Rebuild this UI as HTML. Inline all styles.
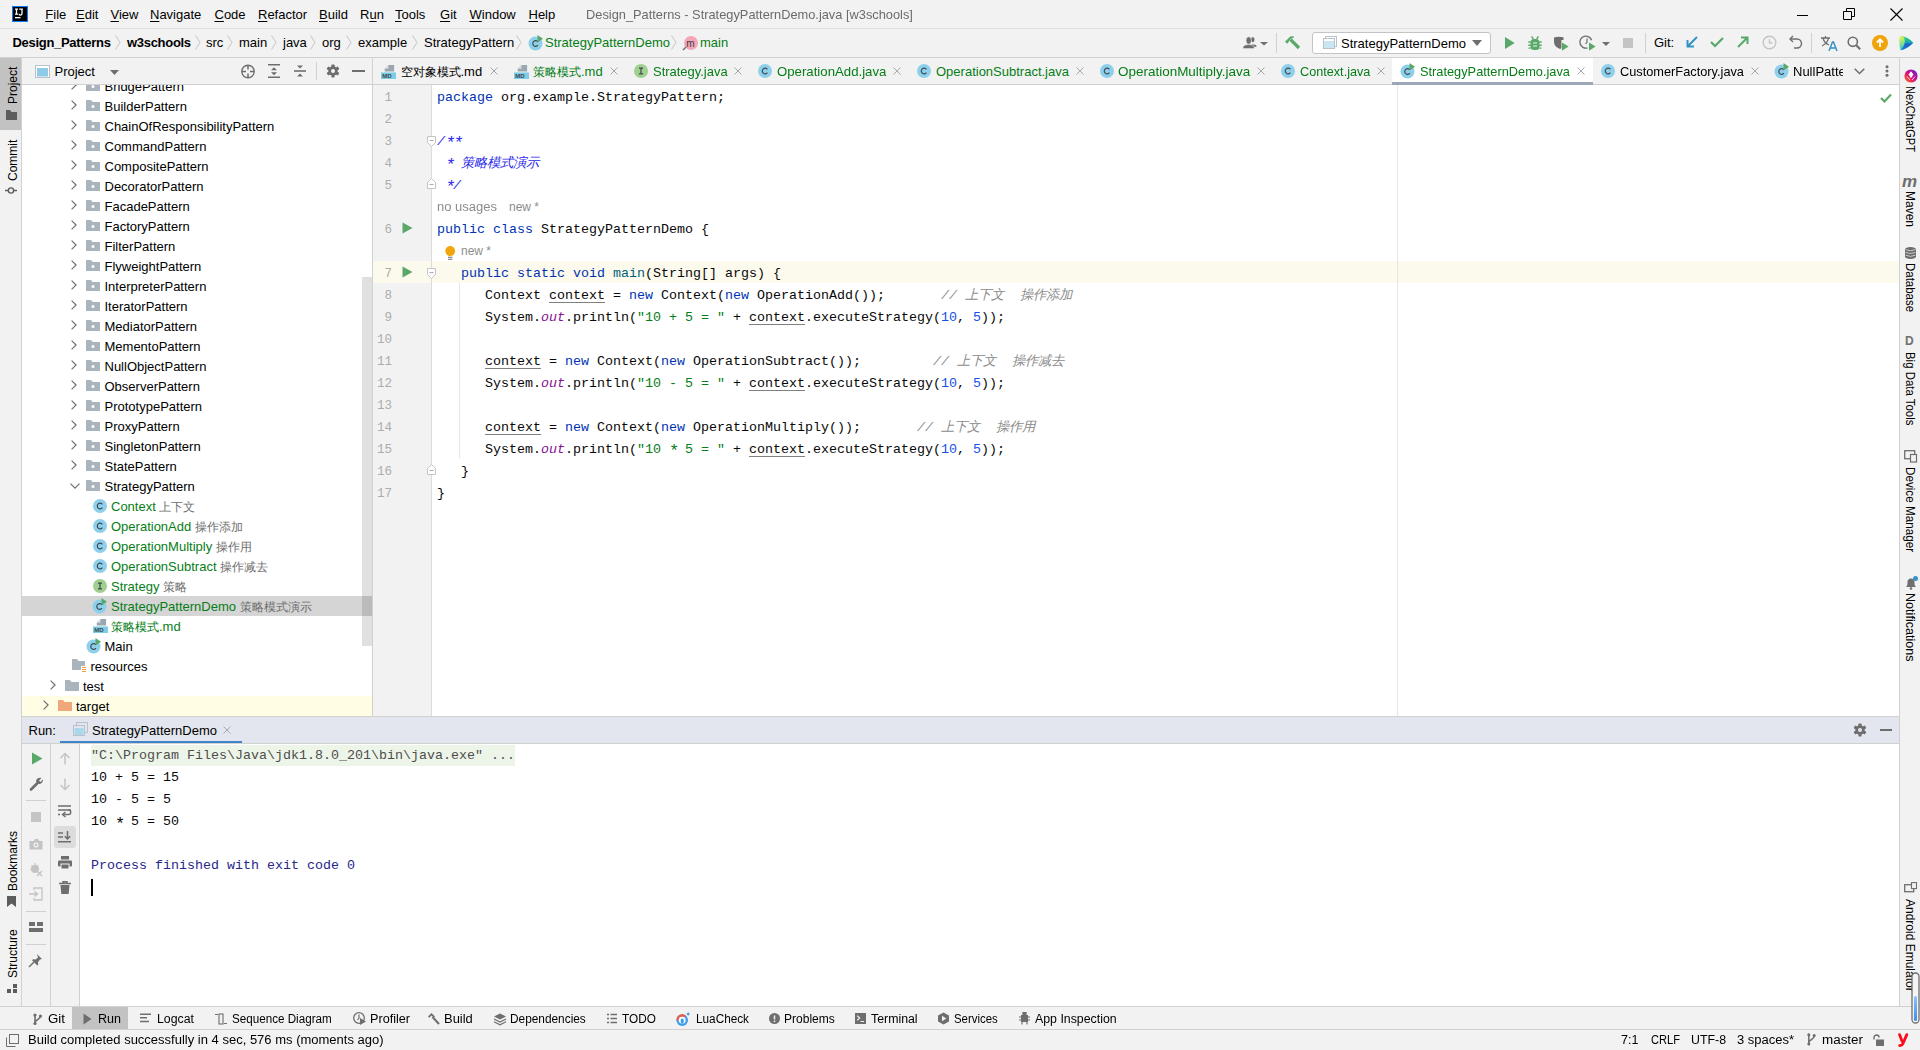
<!DOCTYPE html><html><head><meta charset="utf-8"><style>
html,body{margin:0;padding:0}
body{width:1920px;height:1050px;overflow:hidden;position:relative;background:#f2f2f2;font-family:"Liberation Sans",sans-serif}
.t{position:absolute;white-space:nowrap;line-height:1;font-family:"Liberation Sans",sans-serif}
.r{position:absolute}
.i{position:absolute;overflow:visible}
.m{font-family:"Liberation Mono",monospace;font-size:13.33px}
.u{text-decoration:underline;text-underline-offset:3px;text-decoration-color:#808080;text-decoration-thickness:1px}
.vt{transform-origin:0 0;transform:rotate(90deg)}
.vb{transform-origin:0 0;transform:rotate(-90deg)}
</style></head><body>
<svg width="0" height="0" style="position:absolute">
<defs>
<symbol id="cls" viewBox="0 0 16 16"><circle cx="8" cy="8" r="7" fill="#8dd0ec"/><path d="M10.4 6.4A2.8 2.8 0 1 0 10.4 9.6" fill="none" stroke="#42484e" stroke-width="1.2"/></symbol>
<symbol id="clsrun" viewBox="0 0 16 16"><circle cx="7.5" cy="8.5" r="7" fill="#8dd0ec"/><path d="M9.9 6.9A2.8 2.8 0 1 0 9.9 10.1" fill="none" stroke="#42484e" stroke-width="1.2"/><path d="M9.5 0v7.5l5.5-3.75z" fill="#59a869"/></symbol>
<symbol id="iface" viewBox="0 0 16 16"><circle cx="8" cy="8" r="7" fill="#9fd08f"/><path d="M6 5.2h4M6 10.8h4M8 5.2v5.6" stroke="#42484e" stroke-width="1.2"/></symbol>
<symbol id="folder" viewBox="0 0 16 16"><path d="M1 2h5l1.5 2H15v10H1z" fill="#aab4bc"/><circle cx="8" cy="9" r="1.6" fill="#fff"/></symbol>
<symbol id="folderp" viewBox="0 0 16 16"><path d="M1 2h5l1.5 2H15v10H1z" fill="#aab4bc"/></symbol>
<symbol id="md" viewBox="0 0 16 16"><path d="M8 1h6v7H4V5z" fill="#9aa7b0"/><path d="M4 5l4-4v4z" fill="#fff" opacity=".6"/><rect x="0" y="9" width="16" height="7" fill="#7ecbe4"/><text x="1.2" y="15.3" font-family="Liberation Sans" font-size="6.5" font-weight="bold" fill="#3d4a55">MD</text></symbol>
<symbol id="chev" viewBox="0 0 16 16"><path d="M6 4l4 4-4 4" fill="none" stroke="#6e6e6e" stroke-width="1.2"/></symbol>
<symbol id="chevd" viewBox="0 0 16 16"><path d="M4 6l4 4 4-4" fill="none" stroke="#6e6e6e" stroke-width="1.2"/></symbol>
<symbol id="runtri" viewBox="0 0 16 16"><path d="M4 2.5v11L13 8z" fill="#59a869"/></symbol>
<symbol id="close" viewBox="0 0 16 16"><path d="M4 4l8 8M12 4l-8 8" stroke="#a8a8a8" stroke-width="1.1"/></symbol>
</defs></svg>
<div class="r" style="left:0px;top:28px;width:1920px;height:1px;background:#dedede;"></div><div class="r" style="left:0px;top:57px;width:1920px;height:1px;background:#d1d1d1;"></div><div class="r" style="left:21px;top:58px;width:1px;height:948px;background:#d1d1d1;"></div><div class="r" style="left:0px;top:58px;width:21px;height:72px;background:#c2c2c2;"></div><div class="r" style="left:22px;top:84px;width:350px;height:1px;background:#d1d1d1;"></div><div class="r" style="left:22px;top:85px;width:350px;height:631px;background:#fff;"></div><div class="r" style="left:372px;top:58px;width:1px;height:658px;background:#d1d1d1;"></div><div class="r" style="left:22px;top:596px;width:350px;height:20px;background:#d5d5d5;"></div><div class="r" style="left:22px;top:696px;width:350px;height:20px;background:#fffee4;"></div><div class="r" style="left:362px;top:277px;width:10px;height:369px;background:rgba(0,0,0,0.12);"></div><div class="r" style="left:373px;top:84px;width:1526px;height:1px;background:#d1d1d1;"></div><div class="r" style="left:373px;top:85px;width:1526px;height:631px;background:#fff;"></div><div class="r" style="left:373px;top:85px;width:58px;height:631px;background:#f2f2f2;"></div><div class="r" style="left:373px;top:261px;width:1526px;height:22px;background:#fcfaed;"></div><div class="r" style="left:431px;top:85px;width:1px;height:631px;background:#dcdcdc;"></div><div class="r" style="left:1397px;top:85px;width:1px;height:631px;background:#e6e6e6;"></div><div class="r" style="left:459px;top:283px;width:1px;height:175px;background:#e6e6e6;"></div><div class="r" style="left:1392px;top:58px;width:201px;height:24px;background:#ffffff;"></div><div class="r" style="left:1392px;top:82px;width:201px;height:3px;background:#9ca7b8;"></div><div class="r" style="left:1899px;top:58px;width:1px;height:948px;background:#d1d1d1;"></div><div class="r" style="left:22px;top:716px;width:1877px;height:1px;background:#d1d1d1;"></div><div class="r" style="left:22px;top:717px;width:1877px;height:26px;background:#e3e6ee;"></div><div class="r" style="left:60px;top:741px;width:182px;height:3px;background:#4083c9;"></div><div class="r" style="left:22px;top:743px;width:1877px;height:1px;background:#d1d1d1;"></div><div class="r" style="left:80px;top:744px;width:1819px;height:262px;background:#fff;"></div><div class="r" style="left:50px;top:744px;width:1px;height:262px;background:#d1d1d1;"></div><div class="r" style="left:79px;top:744px;width:1px;height:262px;background:#d1d1d1;"></div><div class="r" style="left:91px;top:745px;width:424px;height:21px;background:#edf5e9;"></div><div class="r" style="left:0px;top:1006px;width:1920px;height:1px;background:#d1d1d1;"></div><div class="r" style="left:0px;top:1029px;width:1920px;height:1px;background:#d1d1d1;"></div><div class="r" style="left:72px;top:1007px;width:56px;height:22px;background:#c2c2c2;"></div><svg class="i" style="left:12px;top:6px;" width="16" height="16" viewBox="0 0 16 16"><rect x="0.5" y="0.5" width="15" height="15" fill="#000" stroke="#087cfa" stroke-width="1"/><path d="M3 3.2h3M4.5 3.2v5M3 8.2h3M7.2 3.2h3.6M10 3.2v4a1.5 1.5 0 0 1-3 .6" fill="none" stroke="#fff" stroke-width="1.3"/><rect x="3" y="11" width="5.5" height="1.3" fill="#fff"/></svg><div class="t " style="left:45.3px;top:8.00px;font-size:13px;color:#000;"><span style="text-decoration:underline;text-underline-offset:2px">F</span>ile</div><div class="t " style="left:76px;top:8.00px;font-size:13px;color:#000;"><span style="text-decoration:underline;text-underline-offset:2px">E</span>dit</div><div class="t " style="left:110.5px;top:8.00px;font-size:13px;color:#000;"><span style="text-decoration:underline;text-underline-offset:2px">V</span>iew</div><div class="t " style="left:150px;top:8.00px;font-size:13px;color:#000;"><span style="text-decoration:underline;text-underline-offset:2px">N</span>avigate</div><div class="t " style="left:214.5px;top:8.00px;font-size:13px;color:#000;"><span style="text-decoration:underline;text-underline-offset:2px">C</span>ode</div><div class="t " style="left:258px;top:8.00px;font-size:13px;color:#000;"><span style="text-decoration:underline;text-underline-offset:2px">R</span>efactor</div><div class="t " style="left:319px;top:8.00px;font-size:13px;color:#000;"><span style="text-decoration:underline;text-underline-offset:2px">B</span>uild</div><div class="t " style="left:360px;top:8.00px;font-size:13px;color:#000;">R<span style="text-decoration:underline;text-underline-offset:2px">u</span>n</div><div class="t " style="left:395px;top:8.00px;font-size:13px;color:#000;"><span style="text-decoration:underline;text-underline-offset:2px">T</span>ools</div><div class="t " style="left:440px;top:8.00px;font-size:13px;color:#000;"><span style="text-decoration:underline;text-underline-offset:2px">G</span>it</div><div class="t " style="left:469.5px;top:8.00px;font-size:13px;color:#000;"><span style="text-decoration:underline;text-underline-offset:2px">W</span>indow</div><div class="t " style="left:528.5px;top:8.00px;font-size:13px;color:#000;"><span style="text-decoration:underline;text-underline-offset:2px">H</span>elp</div><div class="t " style="left:586px;top:7.50px;font-size:13px;color:#6b6b6b;transform:scaleX(0.9857);transform-origin:0 0;">Design_Patterns - StrategyPatternDemo.java [w3schools]</div><svg class="i" style="left:1797px;top:9px;" width="12" height="12" viewBox="0 0 12 12"><path d="M0 6.5h11" stroke="#000" stroke-width="1"/></svg><svg class="i" style="left:1843px;top:8px;" width="12" height="12" viewBox="0 0 12 12"><path d="M0.5 3.5h8v8h-8zM3.5 3.5v-3h8v8h-3" fill="none" stroke="#000" stroke-width="1"/></svg><svg class="i" style="left:1890px;top:8px;" width="13" height="13" viewBox="0 0 13 13"><path d="M0.5 0.5l12 12M12.5 0.5l-12 12" stroke="#000" stroke-width="1.1"/></svg><div class="t " style="left:12.5px;top:35.50px;font-size:13px;color:#000;font-weight:bold;letter-spacing:-0.3px;">Design_Patterns</div><div class="t " style="left:127px;top:35.50px;font-size:13px;color:#000;font-weight:bold;letter-spacing:-0.3px;">w3schools</div><div class="t " style="left:206px;top:35.50px;font-size:13px;color:#000;">src</div><div class="t " style="left:239px;top:35.50px;font-size:13px;color:#000;">main</div><div class="t " style="left:283px;top:35.50px;font-size:13px;color:#000;">java</div><div class="t " style="left:322px;top:35.50px;font-size:13px;color:#000;">org</div><div class="t " style="left:358px;top:35.50px;font-size:13px;color:#000;">example</div><div class="t " style="left:424px;top:35.50px;font-size:13px;color:#000;">StrategyPattern</div><svg class="i" style="left:115px;top:35px;" width="6" height="15" viewBox="0 0 6 15"><path d="M0.5 0.5l4.5 7-4.5 7" fill="none" stroke="#c4c4c4" stroke-width="1"/></svg><svg class="i" style="left:195px;top:35px;" width="6" height="15" viewBox="0 0 6 15"><path d="M0.5 0.5l4.5 7-4.5 7" fill="none" stroke="#c4c4c4" stroke-width="1"/></svg><svg class="i" style="left:227px;top:35px;" width="6" height="15" viewBox="0 0 6 15"><path d="M0.5 0.5l4.5 7-4.5 7" fill="none" stroke="#c4c4c4" stroke-width="1"/></svg><svg class="i" style="left:271px;top:35px;" width="6" height="15" viewBox="0 0 6 15"><path d="M0.5 0.5l4.5 7-4.5 7" fill="none" stroke="#c4c4c4" stroke-width="1"/></svg><svg class="i" style="left:310px;top:35px;" width="6" height="15" viewBox="0 0 6 15"><path d="M0.5 0.5l4.5 7-4.5 7" fill="none" stroke="#c4c4c4" stroke-width="1"/></svg><svg class="i" style="left:346px;top:35px;" width="6" height="15" viewBox="0 0 6 15"><path d="M0.5 0.5l4.5 7-4.5 7" fill="none" stroke="#c4c4c4" stroke-width="1"/></svg><svg class="i" style="left:412px;top:35px;" width="6" height="15" viewBox="0 0 6 15"><path d="M0.5 0.5l4.5 7-4.5 7" fill="none" stroke="#c4c4c4" stroke-width="1"/></svg><svg class="i" style="left:516px;top:35px;" width="6" height="15" viewBox="0 0 6 15"><path d="M0.5 0.5l4.5 7-4.5 7" fill="none" stroke="#c4c4c4" stroke-width="1"/></svg><svg class="i" style="left:671px;top:35px;" width="6" height="15" viewBox="0 0 6 15"><path d="M0.5 0.5l4.5 7-4.5 7" fill="none" stroke="#c4c4c4" stroke-width="1"/></svg><svg class="i" style="left:528px;top:35px;" width="16" height="16" viewBox="0 0 16 16"><use href="#clsrun"/></svg><div class="t " style="left:545px;top:35.50px;font-size:13px;color:#067d17;">StrategyPatternDemo</div><svg class="i" style="left:683px;top:35px;" width="16" height="16" viewBox="0 0 16 16"><circle cx="8" cy="8" r="7" fill="#f4a6b8"/><text x="3.2" y="11.5" font-family="Liberation Sans" font-size="10" fill="#3d3d3d">m</text><path d="M0 15l3-3" stroke="#6e6e6e" stroke-width="1.4"/></svg><div class="t " style="left:700px;top:35.50px;font-size:13px;color:#067d17;">main</div><svg class="i" style="left:1240px;top:34px;" width="28" height="16" viewBox="0 0 28 16"><ellipse cx="12.8" cy="5.6" rx="1.7" ry="2.6" fill="#6e6e6e"/><path d="M11.5 10.2Q16.2 10.2 16.8 12.6L14.5 13z" fill="#6e6e6e"/><ellipse cx="8.7" cy="6.5" rx="2.7" ry="3.7" fill="#6e6e6e" stroke="#f2f2f2" stroke-width=".6"/><path d="M2.8 14.6Q2.8 10.6 8.7 10.6Q14 10.6 14.2 13.4L14.2 14.6z" fill="#6e6e6e" stroke="#f2f2f2" stroke-width=".5"/><path d="M20 8h8l-4 3.6z" fill="#6e6e6e"/></svg><div class="r" style="left:1276px;top:33px;width:1px;height:20px;background:#d1d1d1;"></div><svg class="i" style="left:1284px;top:34px;" width="16" height="16" viewBox="0 0 16 16"><path d="M1 7.8L6.2 2.4 10.2 2.2 9.2 3.9 6.9 4.7 3.3 9.7z" fill="#59a869"/><path d="M6.6 5.6L15 14" stroke="#59a869" stroke-width="3.2"/></svg><div class="r" style="left:1312px;top:32px;width:177px;height:20px;background:#fff;border:1px solid #c4c4c4;border-radius:3px"></div><svg class="i" style="left:1322px;top:35px;" width="16" height="16" viewBox="0 0 16 16"><rect x="3.5" y="1.5" width="11" height="10" fill="none" stroke="#b8c2ca"/><rect x="1.5" y="3.5" width="11" height="10" fill="#fff" stroke="#b8c2ca"/><rect x="2" y="6" width="10" height="7" fill="#cbe6f2"/></svg><div class="t " style="left:1341px;top:36.50px;font-size:13px;color:#000;">StrategyPatternDemo</div><svg class="i" style="left:1472px;top:40px;" width="10" height="6" viewBox="0 0 10 6"><path d="M0 0h10l-5 6z" fill="#6e6e6e"/></svg><svg class="i" style="left:1503px;top:35px;" width="16" height="16" viewBox="0 0 16 16"><path d="M2 2v12l9.7-6z" fill="#59a869"/></svg><svg class="i" style="left:1528px;top:35px;" width="14" height="16" viewBox="0 0 14 16"><rect x="2.5" y="4" width="9" height="11" rx="3.5" fill="#59a869"/><path d="M5.3 4.2L3.6 1.4M8.7 4.2l1.7-2.8M0.3 7h2.5M11.2 7h2.5M0.3 10.3h2.5M11.2 10.3h2.5M0.6 13.4l2-.6M13.4 13.4l-2-.6" stroke="#59a869" stroke-width="1.4"/><path d="M5 8h4M5 11h4" stroke="#f2f2f2" stroke-width="1.2"/></svg><svg class="i" style="left:1553px;top:35px;" width="17" height="17" viewBox="0 0 17 17"><path d="M1 2.5Q5 1.2 10.5 2.2V5H8.4V13.6Q7 14 6 13.6Q1 11.5 1 6.5z" fill="#6e6e6e"/><path d="M9 7.5v8.2l6.6-4.1z" fill="#59a869"/></svg><svg class="i" style="left:1580px;top:35px;" width="17" height="17" viewBox="0 0 17 17"><path d="M11.6 5.3A6 6 0 1 0 7.5 12.9" fill="none" stroke="#6e6e6e" stroke-width="1.4"/><path d="M7 3.6V7L5.6 9" fill="none" stroke="#6e6e6e" stroke-width="1.2"/><path d="M9 7.5v8.2l6.6-4.1z" fill="#59a869"/></svg><svg class="i" style="left:1602px;top:42px;" width="8" height="4" viewBox="0 0 8 4"><path d="M0 0h8l-4 4z" fill="#6e6e6e"/></svg><div class="r" style="left:1623px;top:38px;width:10px;height:10px;background:#c4c4c4;"></div><div class="r" style="left:1645px;top:33px;width:1px;height:20px;background:#d1d1d1;"></div><div class="t " style="left:1654px;top:35.50px;font-size:13px;color:#000;">Git:</div><svg class="i" style="left:1686px;top:36px;" width="12" height="12" viewBox="0 0 12 12"><path d="M11 1L2 10M1.5 4v6.5H8" fill="none" stroke="#3592c4" stroke-width="2"/></svg><svg class="i" style="left:1710px;top:36px;" width="14" height="12" viewBox="0 0 14 12"><path d="M1 6l4 4 8-8" fill="none" stroke="#59a869" stroke-width="2.2"/></svg><svg class="i" style="left:1737px;top:36px;" width="12" height="12" viewBox="0 0 12 12"><path d="M1 11L10 2M4 1.5h6.5V8" fill="none" stroke="#59a869" stroke-width="2"/></svg><svg class="i" style="left:1762px;top:35px;" width="15" height="15" viewBox="0 0 15 15"><circle cx="7.5" cy="7.5" r="6.3" fill="none" stroke="#c4c4c4" stroke-width="1.4"/><path d="M7.5 4v4h3" fill="none" stroke="#c4c4c4" stroke-width="1.3"/></svg><svg class="i" style="left:1789px;top:34px;" width="14" height="14" viewBox="0 0 14 14"><path d="M4 2L1 5l3 3" fill="none" stroke="#6e6e6e" stroke-width="1.4"/><path d="M1.5 5H8a4.5 4.5 0 0 1 0 9H5" fill="none" stroke="#6e6e6e" stroke-width="1.4"/></svg><div class="r" style="left:1811px;top:33px;width:1px;height:20px;background:#d1d1d1;"></div><svg class="i" style="left:1820px;top:35px;" width="17" height="17" viewBox="0 0 17 17"><path d="M1 3h9M5.5 1v2M3 3c1 4 3 6 6 7M8.5 3C8 6 6 9 2 11" fill="none" stroke="#6e6e6e" stroke-width="1.3"/><path d="M9 16l3.5-9h1l3.5 9M10.3 13h5.4" fill="none" stroke="#3592c4" stroke-width="1.5"/></svg><svg class="i" style="left:1847px;top:36px;" width="14" height="14" viewBox="0 0 14 14"><circle cx="5.8" cy="5.8" r="4.6" fill="none" stroke="#6e6e6e" stroke-width="1.6"/><path d="M9.2 9.2l4 4" stroke="#6e6e6e" stroke-width="2"/></svg><svg class="i" style="left:1872px;top:35px;" width="16" height="16" viewBox="0 0 16 16"><circle cx="8" cy="8" r="8" fill="#f0a30a"/><path d="M8 12V4.5M4.8 7.5L8 4.3l3.2 3.2" fill="none" stroke="#fff" stroke-width="1.8"/></svg><svg class="i" style="left:1899px;top:35px;" width="15" height="16" viewBox="0 0 15 16"><defs><linearGradient id="tbA" x1="0" y1="0" x2=".3" y2="1"><stop offset="0" stop-color="#f3f53a"/><stop offset=".5" stop-color="#8ee08a"/><stop offset="1" stop-color="#18c6d8"/></linearGradient><linearGradient id="tbB" x1="0" y1="0" x2="0" y2="1"><stop offset="0" stop-color="#2ad77a"/><stop offset=".45" stop-color="#16a7b8"/><stop offset=".55" stop-color="#1f5fc8"/><stop offset="1" stop-color="#1b7ad6"/></linearGradient></defs><path d="M0.8 1.2Q7 0.8 14.2 7.8Q8 14.6 1.6 15.2Q-0.6 8 0.8 1.2z" fill="url(#tbA)"/><path d="M1.5 1.2Q9 1.5 14.2 7.8Q9 13.5 1.8 15.2Q7.5 9 5.2 2.5z" fill="url(#tbB)"/></svg><div class="t vb" style="left:6.5px;top:104px;font-size:12px;color:#000">Project</div><svg class="i" style="left:6px;top:110px;" width="11" height="10" viewBox="0 0 11 10"><path d="M0 0h4l1.5 2H11v8H0z" fill="#5c5c5c"/></svg><div class="t vb" style="left:6.5px;top:181px;font-size:12px;color:#000">Commit</div><svg class="i" style="left:5px;top:186px;" width="12" height="9" viewBox="0 0 12 9"><circle cx="6" cy="4.5" r="2.6" fill="none" stroke="#5c5c5c" stroke-width="1.4"/><path d="M0 4.5h3.4M8.6 4.5H12" stroke="#5c5c5c" stroke-width="1.4"/></svg><div class="t vb" style="left:6.5px;top:891px;font-size:12px;color:#000">Bookmarks</div><svg class="i" style="left:7px;top:896px;" width="9" height="11" viewBox="0 0 9 11"><path d="M0 0h9v11l-4.5-3.5L0 11z" fill="#5c5c5c"/></svg><div class="t vb" style="left:6.5px;top:978px;font-size:12px;color:#000">Structure</div><svg class="i" style="left:7px;top:984px;" width="10" height="9" viewBox="0 0 10 9"><rect x="0" y="5" width="4" height="4" fill="#5c5c5c"/><rect x="6" y="5" width="4" height="4" fill="#5c5c5c"/><rect x="6" y="0" width="4" height="4" fill="#5c5c5c"/></svg><svg class="i" style="left:35px;top:65px;" width="15" height="13" viewBox="0 0 15 13"><rect x="0.5" y="0.5" width="14" height="12" fill="#fff" stroke="#b8c2ca"/><rect x="2" y="3" width="11" height="8.5" fill="#8fcbe6"/></svg><div class="t " style="left:54.5px;top:65.00px;font-size:13px;color:#000;">Project</div><svg class="i" style="left:110px;top:70px;" width="9" height="5" viewBox="0 0 9 5"><path d="M0 0h9l-4.5 5z" fill="#6e6e6e"/></svg><svg class="i" style="left:241px;top:64px;" width="15" height="15" viewBox="0 0 15 15"><circle cx="7" cy="7.5" r="6.2" fill="none" stroke="#6e6e6e" stroke-width="1.4"/><path d="M7 1.5v4M7 9.5v4M1 7.5h4M9 7.5h4" stroke="#6e6e6e" stroke-width="1.5"/></svg><svg class="i" style="left:268px;top:64px;" width="12" height="15" viewBox="0 0 12 15"><path d="M0 0.8h12M0 13.2h12" stroke="#6e6e6e" stroke-width="1.6"/><path d="M3 6.2L6 3.2l3 3zM3 8.3L6 11.3l3-3z" fill="#6e6e6e"/></svg><svg class="i" style="left:294px;top:64px;" width="12" height="15" viewBox="0 0 12 15"><path d="M0 7h12" stroke="#6e6e6e" stroke-width="1.6"/><path d="M3 1.5L6 4.5l3-3zM3 12.5L6 9.5l3 3z" fill="#6e6e6e"/></svg><div class="r" style="left:316px;top:62px;width:1px;height:18px;background:#d1d1d1;"></div><svg class="i" style="left:326px;top:64px;" width="14" height="14" viewBox="0 0 14 14"><g transform="translate(7 7)"><g fill="#6e6e6e"><circle r="4.7"/><rect x="-1.6" y="-6.5" width="3.2" height="13" rx=".7"/><rect x="-1.6" y="-6.5" width="3.2" height="13" rx=".7" transform="rotate(60)"/><rect x="-1.6" y="-6.5" width="3.2" height="13" rx=".7" transform="rotate(120)"/></g><circle r="2" fill="#f2f2f2"/></g></svg><div class="r" style="left:352px;top:70px;width:13px;height:2px;background:#6e6e6e;"></div><div class="r" style="left:22px;top:85px;width:340px;height:631px;overflow:hidden"><svg class="i" style="left:49px;top:-5px;" width="6" height="10" viewBox="0 0 6 10"><path d="M0.6 0.6l4.5 4.4-4.5 4.4" fill="none" stroke="#6e6e6e" stroke-width="1.2"/></svg><svg class="i" style="left:64px;top:-5px;" width="14" height="11" viewBox="0 0 14 11"><path d="M0 0h5l1.5 2H14v9H0z" fill="#aab4bc"/><circle cx="7" cy="6.5" r="1.5" fill="#fff"/></svg><div class="t " style="left:82.5px;top:-5.50px;font-size:13px;color:#000;">BridgePattern</div><svg class="i" style="left:49px;top:15px;" width="6" height="10" viewBox="0 0 6 10"><path d="M0.6 0.6l4.5 4.4-4.5 4.4" fill="none" stroke="#6e6e6e" stroke-width="1.2"/></svg><svg class="i" style="left:64px;top:15px;" width="14" height="11" viewBox="0 0 14 11"><path d="M0 0h5l1.5 2H14v9H0z" fill="#aab4bc"/><circle cx="7" cy="6.5" r="1.5" fill="#fff"/></svg><div class="t " style="left:82.5px;top:14.50px;font-size:13px;color:#000;">BuilderPattern</div><svg class="i" style="left:49px;top:35px;" width="6" height="10" viewBox="0 0 6 10"><path d="M0.6 0.6l4.5 4.4-4.5 4.4" fill="none" stroke="#6e6e6e" stroke-width="1.2"/></svg><svg class="i" style="left:64px;top:35px;" width="14" height="11" viewBox="0 0 14 11"><path d="M0 0h5l1.5 2H14v9H0z" fill="#aab4bc"/><circle cx="7" cy="6.5" r="1.5" fill="#fff"/></svg><div class="t " style="left:82.5px;top:34.50px;font-size:13px;color:#000;">ChainOfResponsibilityPattern</div><svg class="i" style="left:49px;top:55px;" width="6" height="10" viewBox="0 0 6 10"><path d="M0.6 0.6l4.5 4.4-4.5 4.4" fill="none" stroke="#6e6e6e" stroke-width="1.2"/></svg><svg class="i" style="left:64px;top:55px;" width="14" height="11" viewBox="0 0 14 11"><path d="M0 0h5l1.5 2H14v9H0z" fill="#aab4bc"/><circle cx="7" cy="6.5" r="1.5" fill="#fff"/></svg><div class="t " style="left:82.5px;top:54.50px;font-size:13px;color:#000;">CommandPattern</div><svg class="i" style="left:49px;top:75px;" width="6" height="10" viewBox="0 0 6 10"><path d="M0.6 0.6l4.5 4.4-4.5 4.4" fill="none" stroke="#6e6e6e" stroke-width="1.2"/></svg><svg class="i" style="left:64px;top:75px;" width="14" height="11" viewBox="0 0 14 11"><path d="M0 0h5l1.5 2H14v9H0z" fill="#aab4bc"/><circle cx="7" cy="6.5" r="1.5" fill="#fff"/></svg><div class="t " style="left:82.5px;top:74.50px;font-size:13px;color:#000;">CompositePattern</div><svg class="i" style="left:49px;top:95px;" width="6" height="10" viewBox="0 0 6 10"><path d="M0.6 0.6l4.5 4.4-4.5 4.4" fill="none" stroke="#6e6e6e" stroke-width="1.2"/></svg><svg class="i" style="left:64px;top:95px;" width="14" height="11" viewBox="0 0 14 11"><path d="M0 0h5l1.5 2H14v9H0z" fill="#aab4bc"/><circle cx="7" cy="6.5" r="1.5" fill="#fff"/></svg><div class="t " style="left:82.5px;top:94.50px;font-size:13px;color:#000;">DecoratorPattern</div><svg class="i" style="left:49px;top:115px;" width="6" height="10" viewBox="0 0 6 10"><path d="M0.6 0.6l4.5 4.4-4.5 4.4" fill="none" stroke="#6e6e6e" stroke-width="1.2"/></svg><svg class="i" style="left:64px;top:115px;" width="14" height="11" viewBox="0 0 14 11"><path d="M0 0h5l1.5 2H14v9H0z" fill="#aab4bc"/><circle cx="7" cy="6.5" r="1.5" fill="#fff"/></svg><div class="t " style="left:82.5px;top:114.50px;font-size:13px;color:#000;">FacadePattern</div><svg class="i" style="left:49px;top:135px;" width="6" height="10" viewBox="0 0 6 10"><path d="M0.6 0.6l4.5 4.4-4.5 4.4" fill="none" stroke="#6e6e6e" stroke-width="1.2"/></svg><svg class="i" style="left:64px;top:135px;" width="14" height="11" viewBox="0 0 14 11"><path d="M0 0h5l1.5 2H14v9H0z" fill="#aab4bc"/><circle cx="7" cy="6.5" r="1.5" fill="#fff"/></svg><div class="t " style="left:82.5px;top:134.50px;font-size:13px;color:#000;">FactoryPattern</div><svg class="i" style="left:49px;top:155px;" width="6" height="10" viewBox="0 0 6 10"><path d="M0.6 0.6l4.5 4.4-4.5 4.4" fill="none" stroke="#6e6e6e" stroke-width="1.2"/></svg><svg class="i" style="left:64px;top:155px;" width="14" height="11" viewBox="0 0 14 11"><path d="M0 0h5l1.5 2H14v9H0z" fill="#aab4bc"/><circle cx="7" cy="6.5" r="1.5" fill="#fff"/></svg><div class="t " style="left:82.5px;top:154.50px;font-size:13px;color:#000;">FilterPattern</div><svg class="i" style="left:49px;top:175px;" width="6" height="10" viewBox="0 0 6 10"><path d="M0.6 0.6l4.5 4.4-4.5 4.4" fill="none" stroke="#6e6e6e" stroke-width="1.2"/></svg><svg class="i" style="left:64px;top:175px;" width="14" height="11" viewBox="0 0 14 11"><path d="M0 0h5l1.5 2H14v9H0z" fill="#aab4bc"/><circle cx="7" cy="6.5" r="1.5" fill="#fff"/></svg><div class="t " style="left:82.5px;top:174.50px;font-size:13px;color:#000;">FlyweightPattern</div><svg class="i" style="left:49px;top:195px;" width="6" height="10" viewBox="0 0 6 10"><path d="M0.6 0.6l4.5 4.4-4.5 4.4" fill="none" stroke="#6e6e6e" stroke-width="1.2"/></svg><svg class="i" style="left:64px;top:195px;" width="14" height="11" viewBox="0 0 14 11"><path d="M0 0h5l1.5 2H14v9H0z" fill="#aab4bc"/><circle cx="7" cy="6.5" r="1.5" fill="#fff"/></svg><div class="t " style="left:82.5px;top:194.50px;font-size:13px;color:#000;">InterpreterPattern</div><svg class="i" style="left:49px;top:215px;" width="6" height="10" viewBox="0 0 6 10"><path d="M0.6 0.6l4.5 4.4-4.5 4.4" fill="none" stroke="#6e6e6e" stroke-width="1.2"/></svg><svg class="i" style="left:64px;top:215px;" width="14" height="11" viewBox="0 0 14 11"><path d="M0 0h5l1.5 2H14v9H0z" fill="#aab4bc"/><circle cx="7" cy="6.5" r="1.5" fill="#fff"/></svg><div class="t " style="left:82.5px;top:214.50px;font-size:13px;color:#000;">IteratorPattern</div><svg class="i" style="left:49px;top:235px;" width="6" height="10" viewBox="0 0 6 10"><path d="M0.6 0.6l4.5 4.4-4.5 4.4" fill="none" stroke="#6e6e6e" stroke-width="1.2"/></svg><svg class="i" style="left:64px;top:235px;" width="14" height="11" viewBox="0 0 14 11"><path d="M0 0h5l1.5 2H14v9H0z" fill="#aab4bc"/><circle cx="7" cy="6.5" r="1.5" fill="#fff"/></svg><div class="t " style="left:82.5px;top:234.50px;font-size:13px;color:#000;">MediatorPattern</div><svg class="i" style="left:49px;top:255px;" width="6" height="10" viewBox="0 0 6 10"><path d="M0.6 0.6l4.5 4.4-4.5 4.4" fill="none" stroke="#6e6e6e" stroke-width="1.2"/></svg><svg class="i" style="left:64px;top:255px;" width="14" height="11" viewBox="0 0 14 11"><path d="M0 0h5l1.5 2H14v9H0z" fill="#aab4bc"/><circle cx="7" cy="6.5" r="1.5" fill="#fff"/></svg><div class="t " style="left:82.5px;top:254.50px;font-size:13px;color:#000;">MementoPattern</div><svg class="i" style="left:49px;top:275px;" width="6" height="10" viewBox="0 0 6 10"><path d="M0.6 0.6l4.5 4.4-4.5 4.4" fill="none" stroke="#6e6e6e" stroke-width="1.2"/></svg><svg class="i" style="left:64px;top:275px;" width="14" height="11" viewBox="0 0 14 11"><path d="M0 0h5l1.5 2H14v9H0z" fill="#aab4bc"/><circle cx="7" cy="6.5" r="1.5" fill="#fff"/></svg><div class="t " style="left:82.5px;top:274.50px;font-size:13px;color:#000;">NullObjectPattern</div><svg class="i" style="left:49px;top:295px;" width="6" height="10" viewBox="0 0 6 10"><path d="M0.6 0.6l4.5 4.4-4.5 4.4" fill="none" stroke="#6e6e6e" stroke-width="1.2"/></svg><svg class="i" style="left:64px;top:295px;" width="14" height="11" viewBox="0 0 14 11"><path d="M0 0h5l1.5 2H14v9H0z" fill="#aab4bc"/><circle cx="7" cy="6.5" r="1.5" fill="#fff"/></svg><div class="t " style="left:82.5px;top:294.50px;font-size:13px;color:#000;">ObserverPattern</div><svg class="i" style="left:49px;top:315px;" width="6" height="10" viewBox="0 0 6 10"><path d="M0.6 0.6l4.5 4.4-4.5 4.4" fill="none" stroke="#6e6e6e" stroke-width="1.2"/></svg><svg class="i" style="left:64px;top:315px;" width="14" height="11" viewBox="0 0 14 11"><path d="M0 0h5l1.5 2H14v9H0z" fill="#aab4bc"/><circle cx="7" cy="6.5" r="1.5" fill="#fff"/></svg><div class="t " style="left:82.5px;top:314.50px;font-size:13px;color:#000;">PrototypePattern</div><svg class="i" style="left:49px;top:335px;" width="6" height="10" viewBox="0 0 6 10"><path d="M0.6 0.6l4.5 4.4-4.5 4.4" fill="none" stroke="#6e6e6e" stroke-width="1.2"/></svg><svg class="i" style="left:64px;top:335px;" width="14" height="11" viewBox="0 0 14 11"><path d="M0 0h5l1.5 2H14v9H0z" fill="#aab4bc"/><circle cx="7" cy="6.5" r="1.5" fill="#fff"/></svg><div class="t " style="left:82.5px;top:334.50px;font-size:13px;color:#000;">ProxyPattern</div><svg class="i" style="left:49px;top:355px;" width="6" height="10" viewBox="0 0 6 10"><path d="M0.6 0.6l4.5 4.4-4.5 4.4" fill="none" stroke="#6e6e6e" stroke-width="1.2"/></svg><svg class="i" style="left:64px;top:355px;" width="14" height="11" viewBox="0 0 14 11"><path d="M0 0h5l1.5 2H14v9H0z" fill="#aab4bc"/><circle cx="7" cy="6.5" r="1.5" fill="#fff"/></svg><div class="t " style="left:82.5px;top:354.50px;font-size:13px;color:#000;">SingletonPattern</div><svg class="i" style="left:49px;top:375px;" width="6" height="10" viewBox="0 0 6 10"><path d="M0.6 0.6l4.5 4.4-4.5 4.4" fill="none" stroke="#6e6e6e" stroke-width="1.2"/></svg><svg class="i" style="left:64px;top:375px;" width="14" height="11" viewBox="0 0 14 11"><path d="M0 0h5l1.5 2H14v9H0z" fill="#aab4bc"/><circle cx="7" cy="6.5" r="1.5" fill="#fff"/></svg><div class="t " style="left:82.5px;top:374.50px;font-size:13px;color:#000;">StatePattern</div><svg class="i" style="left:48px;top:398px;" width="10" height="6" viewBox="0 0 10 6"><path d="M0.5 0.6l4.5 4.5 4.5-4.5" fill="none" stroke="#6e6e6e" stroke-width="1.2"/></svg><svg class="i" style="left:64px;top:395px;" width="14" height="11" viewBox="0 0 14 11"><path d="M0 0h5l1.5 2H14v9H0z" fill="#aab4bc"/><circle cx="7" cy="6.5" r="1.5" fill="#fff"/></svg><div class="t " style="left:82.5px;top:394.50px;font-size:13px;color:#000;">StrategyPattern</div><svg class="i" style="left:70px;top:413px;" width="16" height="16" viewBox="0 0 16 16"><use href="#cls"/></svg><div class="t " style="left:89px;top:414.50px;font-size:13px;color:#067d17;">Context <span style="color:#6e6e6e"><span style="font-size:12px">上下文</span></span></div><svg class="i" style="left:70px;top:433px;" width="16" height="16" viewBox="0 0 16 16"><use href="#cls"/></svg><div class="t " style="left:89px;top:434.50px;font-size:13px;color:#067d17;">OperationAdd <span style="color:#6e6e6e"><span style="font-size:12px">操作添加</span></span></div><svg class="i" style="left:70px;top:453px;" width="16" height="16" viewBox="0 0 16 16"><use href="#cls"/></svg><div class="t " style="left:89px;top:454.50px;font-size:13px;color:#067d17;">OperationMultiply <span style="color:#6e6e6e"><span style="font-size:12px">操作用</span></span></div><svg class="i" style="left:70px;top:473px;" width="16" height="16" viewBox="0 0 16 16"><use href="#cls"/></svg><div class="t " style="left:89px;top:474.50px;font-size:13px;color:#067d17;">OperationSubtract <span style="color:#6e6e6e"><span style="font-size:12px">操作减去</span></span></div><svg class="i" style="left:70px;top:493px;" width="16" height="16" viewBox="0 0 16 16"><use href="#iface"/></svg><div class="t " style="left:89px;top:494.50px;font-size:13px;color:#067d17;">Strategy <span style="color:#6e6e6e"><span style="font-size:12px">策略</span></span></div><svg class="i" style="left:70px;top:513px;" width="16" height="16" viewBox="0 0 16 16"><use href="#clsrun"/></svg><div class="t " style="left:89px;top:514.50px;font-size:13px;color:#067d17;">StrategyPatternDemo <span style="color:#6e6e6e"><span style="font-size:12px">策略模式演示</span></span></div><svg class="i" style="left:71px;top:533px;" width="15" height="15" viewBox="0 0 16 16"><use href="#md"/></svg><div class="t " style="left:89px;top:534.50px;font-size:13px;color:#067d17;"><span style="font-size:12px">策略模式</span>.md</div><svg class="i" style="left:64px;top:553px;" width="16" height="16" viewBox="0 0 16 16"><use href="#clsrun"/></svg><div class="t " style="left:82.5px;top:554.50px;font-size:13px;color:#000;">Main</div><svg class="i" style="left:50px;top:574px;" width="16" height="14" viewBox="0 0 16 14"><path d="M0 0h5l1.5 2H13v9H0z" fill="#aab4bc"/><rect x="9" y="7" width="6" height="7" fill="#fff"/><path d="M10 8.5h4M10 10.5h4M10 12.5h4" stroke="#e8a33e" stroke-width="1"/></svg><div class="t " style="left:68.5px;top:574.50px;font-size:13px;color:#000;">resources</div><svg class="i" style="left:28px;top:595px;" width="6" height="10" viewBox="0 0 6 10"><path d="M0.6 0.6l4.5 4.4-4.5 4.4" fill="none" stroke="#6e6e6e" stroke-width="1.2"/></svg><svg class="i" style="left:43px;top:595px;" width="14" height="11" viewBox="0 0 14 11"><path d="M0 0h5l1.5 2H14v9H0z" fill="#aab4bc"/></svg><div class="t " style="left:61px;top:594.50px;font-size:13px;color:#000;">test</div><svg class="i" style="left:21px;top:615px;" width="6" height="10" viewBox="0 0 6 10"><path d="M0.6 0.6l4.5 4.4-4.5 4.4" fill="none" stroke="#6e6e6e" stroke-width="1.2"/></svg><svg class="i" style="left:36px;top:615px;" width="14" height="11" viewBox="0 0 14 11"><path d="M0 0h5l1.5 2H14v9H0z" fill="#f0a77a"/></svg><div class="t " style="left:54px;top:614.50px;font-size:13px;color:#000;">target</div></div><svg class="i" style="left:381px;top:64px;" width="15" height="15" viewBox="0 0 16 16"><use href="#md"/></svg><div class="t " style="left:400.5px;top:64.50px;font-size:13px;color:#000;"><span style="font-size:12px">空对象模式</span>.md</div><svg class="i" style="left:490px;top:67px;" width="8" height="8" viewBox="0 0 8 8"><path d="M0.5 0.5l7 7M7.5 0.5l-7 7" stroke="#a8a8a8" stroke-width="1"/></svg><svg class="i" style="left:514px;top:64px;" width="15" height="15" viewBox="0 0 16 16"><use href="#md"/></svg><div class="t " style="left:533px;top:64.50px;font-size:13px;color:#067d17;"><span style="font-size:12px">策略模式</span>.md</div><svg class="i" style="left:610px;top:67px;" width="8" height="8" viewBox="0 0 8 8"><path d="M0.5 0.5l7 7M7.5 0.5l-7 7" stroke="#a8a8a8" stroke-width="1"/></svg><svg class="i" style="left:633px;top:63px;" width="16" height="16" viewBox="0 0 16 16"><use href="#iface"/></svg><div class="t " style="left:653px;top:64.50px;font-size:13px;color:#067d17;transform:scaleX(0.9957);transform-origin:0 0;">Strategy.java</div><svg class="i" style="left:734px;top:67px;" width="8" height="8" viewBox="0 0 8 8"><path d="M0.5 0.5l7 7M7.5 0.5l-7 7" stroke="#a8a8a8" stroke-width="1"/></svg><svg class="i" style="left:757px;top:63px;" width="16" height="16" viewBox="0 0 16 16"><use href="#cls"/></svg><div class="t " style="left:777px;top:64.50px;font-size:13px;color:#067d17;transform:scaleX(1.0156);transform-origin:0 0;">OperationAdd.java</div><svg class="i" style="left:893px;top:67px;" width="8" height="8" viewBox="0 0 8 8"><path d="M0.5 0.5l7 7M7.5 0.5l-7 7" stroke="#a8a8a8" stroke-width="1"/></svg><svg class="i" style="left:916px;top:63px;" width="16" height="16" viewBox="0 0 16 16"><use href="#cls"/></svg><div class="t " style="left:936px;top:64.50px;font-size:13px;color:#067d17;transform:scaleX(1.0000);transform-origin:0 0;">OperationSubtract.java</div><svg class="i" style="left:1076px;top:67px;" width="8" height="8" viewBox="0 0 8 8"><path d="M0.5 0.5l7 7M7.5 0.5l-7 7" stroke="#a8a8a8" stroke-width="1"/></svg><svg class="i" style="left:1099px;top:63px;" width="16" height="16" viewBox="0 0 16 16"><use href="#cls"/></svg><div class="t " style="left:1118px;top:64.50px;font-size:13px;color:#067d17;transform:scaleX(1.0361);transform-origin:0 0;">OperationMultiply.java</div><svg class="i" style="left:1257px;top:67px;" width="8" height="8" viewBox="0 0 8 8"><path d="M0.5 0.5l7 7M7.5 0.5l-7 7" stroke="#a8a8a8" stroke-width="1"/></svg><svg class="i" style="left:1280px;top:63px;" width="16" height="16" viewBox="0 0 16 16"><use href="#cls"/></svg><div class="t " style="left:1300px;top:64.50px;font-size:13px;color:#067d17;transform:scaleX(0.9740);transform-origin:0 0;">Context.java</div><svg class="i" style="left:1377px;top:67px;" width="8" height="8" viewBox="0 0 8 8"><path d="M0.5 0.5l7 7M7.5 0.5l-7 7" stroke="#a8a8a8" stroke-width="1"/></svg><svg class="i" style="left:1400px;top:63px;" width="16" height="16" viewBox="0 0 16 16"><use href="#clsrun"/></svg><div class="t " style="left:1420px;top:64.50px;font-size:13px;color:#067d17;transform:scaleX(0.9836);transform-origin:0 0;">StrategyPatternDemo.java</div><svg class="i" style="left:1577px;top:67px;" width="8" height="8" viewBox="0 0 8 8"><path d="M0.5 0.5l7 7M7.5 0.5l-7 7" stroke="#a8a8a8" stroke-width="1"/></svg><svg class="i" style="left:1600px;top:63px;" width="16" height="16" viewBox="0 0 16 16"><use href="#cls"/></svg><div class="t " style="left:1620px;top:64.50px;font-size:13px;color:#000;transform:scaleX(0.9825);transform-origin:0 0;">CustomerFactory.java</div><svg class="i" style="left:1751px;top:67px;" width="8" height="8" viewBox="0 0 8 8"><path d="M0.5 0.5l7 7M7.5 0.5l-7 7" stroke="#a8a8a8" stroke-width="1"/></svg><svg class="i" style="left:1774px;top:63px;" width="16" height="16" viewBox="0 0 16 16"><use href="#clsrun"/></svg><div class="r" style="left:1793px;top:58px;width:50px;height:26px;overflow:hidden"><div class="t" style="left:0;top:6.5px;font-size:13px;color:#000;-webkit-mask-image:linear-gradient(90deg,#000 80%,transparent)">NullPatternDemo</div></div><svg class="i" style="left:1854px;top:68px;" width="11" height="7" viewBox="0 0 11 7"><path d="M0.7 0.7l4.8 4.8 4.8-4.8" fill="none" stroke="#6e6e6e" stroke-width="1.5"/></svg><svg class="i" style="left:1885px;top:65px;" width="4" height="12" viewBox="0 0 4 12"><circle cx="2" cy="1.7" r="1.5" fill="#6e6e6e"/><circle cx="2" cy="6" r="1.5" fill="#6e6e6e"/><circle cx="2" cy="10.3" r="1.5" fill="#6e6e6e"/></svg><svg class="i" style="left:1880px;top:93px;" width="12" height="10" viewBox="0 0 12 10"><path d="M1 5l3.5 3.5L11 1.5" fill="none" stroke="#59a869" stroke-width="2.2"/></svg><div class="t m" style="left:365px;width:27px;text-align:right;top:91.5px;line-height:1;font-size:12.5px;color:#adadad">1</div><div class="t m" style="left:365px;width:27px;text-align:right;top:113.5px;line-height:1;font-size:12.5px;color:#adadad">2</div><div class="t m" style="left:365px;width:27px;text-align:right;top:135.5px;line-height:1;font-size:12.5px;color:#adadad">3</div><div class="t m" style="left:365px;width:27px;text-align:right;top:157.5px;line-height:1;font-size:12.5px;color:#adadad">4</div><div class="t m" style="left:365px;width:27px;text-align:right;top:179.5px;line-height:1;font-size:12.5px;color:#adadad">5</div><div class="t m" style="left:365px;width:27px;text-align:right;top:223.5px;line-height:1;font-size:12.5px;color:#adadad">6</div><div class="t m" style="left:365px;width:27px;text-align:right;top:267.5px;line-height:1;font-size:12.5px;color:#adadad">7</div><div class="t m" style="left:365px;width:27px;text-align:right;top:289.5px;line-height:1;font-size:12.5px;color:#adadad">8</div><div class="t m" style="left:365px;width:27px;text-align:right;top:311.5px;line-height:1;font-size:12.5px;color:#adadad">9</div><div class="t m" style="left:365px;width:27px;text-align:right;top:333.5px;line-height:1;font-size:12.5px;color:#adadad">10</div><div class="t m" style="left:365px;width:27px;text-align:right;top:355.5px;line-height:1;font-size:12.5px;color:#adadad">11</div><div class="t m" style="left:365px;width:27px;text-align:right;top:377.5px;line-height:1;font-size:12.5px;color:#adadad">12</div><div class="t m" style="left:365px;width:27px;text-align:right;top:399.5px;line-height:1;font-size:12.5px;color:#adadad">13</div><div class="t m" style="left:365px;width:27px;text-align:right;top:421.5px;line-height:1;font-size:12.5px;color:#adadad">14</div><div class="t m" style="left:365px;width:27px;text-align:right;top:443.5px;line-height:1;font-size:12.5px;color:#adadad">15</div><div class="t m" style="left:365px;width:27px;text-align:right;top:465.5px;line-height:1;font-size:12.5px;color:#adadad">16</div><div class="t m" style="left:365px;width:27px;text-align:right;top:487.5px;line-height:1;font-size:12.5px;color:#adadad">17</div><svg class="i" style="left:402px;top:222px;" width="11" height="12" viewBox="0 0 11 12"><path d="M0.5 0.5v11L10.5 6z" fill="#59a869"/></svg><svg class="i" style="left:402px;top:266px;" width="11" height="12" viewBox="0 0 11 12"><path d="M0.5 0.5v11L10.5 6z" fill="#59a869"/></svg><svg class="i" style="left:427px;top:136px;" width="9" height="11" viewBox="0 0 9 11"><path d="M0.5 0.5h8v6l-4 4-4-4z" fill="#fff" stroke="#c4c4c4"/><path d="M2.5 4.5h4" stroke="#adadad"/></svg><svg class="i" style="left:427px;top:178px;" width="9" height="11" viewBox="0 0 9 11"><path d="M0.5 10.5h8v-6l-4-4-4 4z" fill="#fff" stroke="#c4c4c4"/><path d="M2.5 6.5h4" stroke="#adadad"/></svg><svg class="i" style="left:427px;top:268px;" width="9" height="11" viewBox="0 0 9 11"><path d="M0.5 0.5h8v6l-4 4-4-4z" fill="#fff" stroke="#c4c4c4"/><path d="M2.5 4.5h4" stroke="#adadad"/></svg><svg class="i" style="left:427px;top:464px;" width="9" height="11" viewBox="0 0 9 11"><path d="M0.5 10.5h8v-6l-4-4-4 4z" fill="#fff" stroke="#c4c4c4"/><path d="M2.5 6.5h4" stroke="#adadad"/></svg><div class="t m" style="left:437px;top:90.6px;color:#080808"><span style="color:#0033b3">package</span> org.example.StrategyPattern;</div><div class="t m" style="left:437px;top:134.6px;color:#080808"><span style="color:#2a2ae8;font-style:italic">/<span style="display:inline-block;width:8px;text-align:center;font-size:17px;line-height:1px;position:relative;top:3.5px">*</span><span style="display:inline-block;width:8px;text-align:center;font-size:17px;line-height:1px;position:relative;top:3.5px">*</span></span></div><div class="t m" style="left:437px;top:156.6px;color:#080808"><span style="color:#2a2ae8;font-style:italic">&nbsp;<span style="display:inline-block;width:8px;text-align:center;font-size:17px;line-height:1px;position:relative;top:3.5px">*</span>&nbsp;策略模式演示</span></div><div class="t m" style="left:437px;top:178.6px;color:#080808"><span style="color:#2a2ae8;font-style:italic">&nbsp;<span style="display:inline-block;width:8px;text-align:center;font-size:17px;line-height:1px;position:relative;top:3.5px">*</span>/</span></div><div class="t " style="left:437px;top:200.92px;font-size:12.5px;color:#8c8c8c;transform:scaleX(1.0401);transform-origin:0 0;">no usages</div><div class="t " style="left:509px;top:201.34px;font-size:12px;color:#8c8c8c;">new *</div><div class="t m" style="left:437px;top:222.6px;color:#080808"><span style="color:#0033b3">public</span> <span style="color:#0033b3">class</span> StrategyPatternDemo {</div><svg class="i" style="left:445px;top:246px;" width="11" height="14" viewBox="0 0 11 14"><circle cx="5.2" cy="5" r="4.9" fill="#f2a60d"/><path d="M2.7 7.5h5l-.6 2.3H3.3z" fill="#f2a60d"/><path d="M3 11.2h4.4M3 13.2h4.4" stroke="#6e6e6e" stroke-width="1.1"/></svg><div class="t " style="left:461px;top:245.34px;font-size:12px;color:#8c8c8c;">new *</div><div class="t m" style="left:437px;top:266.6px;color:#080808">&nbsp;&nbsp;&nbsp;<span style="color:#0033b3">public</span> <span style="color:#0033b3">static</span> <span style="color:#0033b3">void</span> <span style="color:#00627a">main</span>(String[] args) {</div><div class="t m" style="left:437px;top:288.6px;color:#080808">&nbsp;&nbsp;&nbsp;&nbsp;&nbsp;&nbsp;Context <span class="u">context</span> = <span style="color:#0033b3">new</span> Context(<span style="color:#0033b3">new</span> OperationAdd());&nbsp;&nbsp;&nbsp;&nbsp;&nbsp;&nbsp;&nbsp;<span style="color:#8c8c8c;font-style:italic">// 上下文&nbsp;&nbsp;操作添加</span></div><div class="t m" style="left:437px;top:310.6px;color:#080808">&nbsp;&nbsp;&nbsp;&nbsp;&nbsp;&nbsp;System.<span style="color:#871094;font-style:italic">out</span>.println(<span style="color:#067d17">&quot;10 + 5 = &quot;</span> + <span class="u">context</span>.executeStrategy(<span style="color:#1750eb">10</span>, <span style="color:#1750eb">5</span>));</div><div class="t m" style="left:437px;top:354.6px;color:#080808">&nbsp;&nbsp;&nbsp;&nbsp;&nbsp;&nbsp;<span class="u">context</span> = <span style="color:#0033b3">new</span> Context(<span style="color:#0033b3">new</span> OperationSubtract());&nbsp;&nbsp;&nbsp;&nbsp;&nbsp;&nbsp;&nbsp;&nbsp;&nbsp;<span style="color:#8c8c8c;font-style:italic">// 上下文&nbsp;&nbsp;操作减去</span></div><div class="t m" style="left:437px;top:376.6px;color:#080808">&nbsp;&nbsp;&nbsp;&nbsp;&nbsp;&nbsp;System.<span style="color:#871094;font-style:italic">out</span>.println(<span style="color:#067d17">&quot;10 - 5 = &quot;</span> + <span class="u">context</span>.executeStrategy(<span style="color:#1750eb">10</span>, <span style="color:#1750eb">5</span>));</div><div class="t m" style="left:437px;top:420.6px;color:#080808">&nbsp;&nbsp;&nbsp;&nbsp;&nbsp;&nbsp;<span class="u">context</span> = <span style="color:#0033b3">new</span> Context(<span style="color:#0033b3">new</span> OperationMultiply());&nbsp;&nbsp;&nbsp;&nbsp;&nbsp;&nbsp;&nbsp;<span style="color:#8c8c8c;font-style:italic">// 上下文&nbsp;&nbsp;操作用</span></div><div class="t m" style="left:437px;top:442.6px;color:#080808">&nbsp;&nbsp;&nbsp;&nbsp;&nbsp;&nbsp;System.<span style="color:#871094;font-style:italic">out</span>.println(<span style="color:#067d17">&quot;10 <span style="display:inline-block;width:8px;text-align:center;font-size:17px;line-height:1px;position:relative;top:3.5px">*</span> 5 = &quot;</span> + <span class="u">context</span>.executeStrategy(<span style="color:#1750eb">10</span>, <span style="color:#1750eb">5</span>));</div><div class="t m" style="left:437px;top:464.6px;color:#080808">&nbsp;&nbsp;&nbsp;}</div><div class="t m" style="left:437px;top:486.6px;color:#080808">}</div><svg class="i" style="left:1904px;top:69px;" width="14" height="14" viewBox="0 0 14 14"><defs><linearGradient id="ncg" x1="0" y1="1" x2="1" y2="0"><stop offset="0" stop-color="#ff7a00"/><stop offset=".45" stop-color="#e0127a"/><stop offset="1" stop-color="#5b1be0"/></linearGradient></defs><circle cx="7" cy="7" r="6.6" fill="url(#ncg)"/><path d="M7 2.8l2 2.6-2 3.2-2-3.2zM3 7.5l3 3.5M11 7.5l-3 3.5" fill="#fff" stroke="#fff" stroke-width=".8"/></svg><div class="t" style="left:1916px;top:86px;font-size:12px;color:#000;transform-origin:0 0;transform:rotate(90deg) scaleX(0.925)">NexChatGPT</div><div class="t " style="left:1902px;top:172.61px;font-size:17px;color:#6e6e6e;font-style:italic;font-weight:bold;letter-spacing:-1px">m</div><div class="t" style="left:1916px;top:191px;font-size:12px;color:#000;transform-origin:0 0;transform:rotate(90deg) scaleX(1.0)">Maven</div><svg class="i" style="left:1905px;top:247px;" width="11" height="12" viewBox="0 0 11 12"><path d="M0 2.2a5.5 2.2 0 0 1 11 0v7.6a5.5 2.2 0 0 1-11 0z" fill="#6e6e6e"/><path d="M0.6 2.6q4.9 2.4 9.8 0M0.6 5.4q4.9 2.4 9.8 0M0.6 8.2q4.9 2.4 9.8 0" fill="none" stroke="#e0e0e0" stroke-width=".8"/></svg><div class="t" style="left:1916px;top:263px;font-size:12px;color:#000;transform-origin:0 0;transform:rotate(90deg) scaleX(0.954)">Database</div><div class="t " style="left:1905px;top:335.34px;font-size:12px;color:#6e6e6e;font-weight:bold">D</div><div class="t" style="left:1916px;top:352px;font-size:12px;color:#000;transform-origin:0 0;transform:rotate(90deg) scaleX(0.951)">Big Data Tools</div><svg class="i" style="left:1904px;top:450px;" width="13" height="12" viewBox="0 0 13 12"><rect x="0.7" y="0.7" width="10" height="8" fill="none" stroke="#6e6e6e" stroke-width="1.3"/><rect x="6.5" y="4.5" width="6" height="7.5" fill="#f2f2f2" stroke="#6e6e6e" stroke-width="1.2"/></svg><div class="t" style="left:1916px;top:467px;font-size:12px;color:#000;transform-origin:0 0;transform:rotate(90deg) scaleX(0.973)">Device Manager</div><svg class="i" style="left:1904px;top:576px;" width="14" height="14" viewBox="0 0 14 14"><path d="M2 11c1.5-1 1.5-3 1.5-5a3.5 3.5 0 0 1 7 0c0 2 0 4 1.5 5z" fill="#6e6e6e"/><circle cx="7" cy="12.5" r="1.3" fill="#6e6e6e"/><circle cx="11.5" cy="2.5" r="2.5" fill="#3592c4"/></svg><div class="t" style="left:1916px;top:593px;font-size:12px;color:#000;transform-origin:0 0;transform:rotate(90deg) scaleX(1.05)">Notifications</div><svg class="i" style="left:1904px;top:882px;" width="13" height="13" viewBox="0 0 13 13"><rect x="0.7" y="2.7" width="9" height="7" fill="none" stroke="#6e6e6e" stroke-width="1.3"/><rect x="7.5" y="0.6" width="5" height="6" fill="#f2f2f2" stroke="#6e6e6e" stroke-width="1.1"/></svg><div class="t" style="left:1916px;top:899px;font-size:12px;color:#000;transform-origin:0 0;transform:rotate(90deg) scaleX(1.0)">Android Emulator</div><svg class="i" style="left:1911px;top:972px;" width="9" height="52" viewBox="0 0 9 52"><rect x="1" y="1" width="7" height="50" rx="3.5" fill="#f4f4f4" stroke="#6e6e6e" stroke-width="1.3"/><defs><linearGradient id="sbg" x1="0" y1="0" x2="0" y2="1"><stop offset="0" stop-color="#8cc4ff"/><stop offset="1" stop-color="#3d8bf0"/></linearGradient></defs><rect x="3" y="24" width="3" height="25" rx="1.5" fill="url(#sbg)"/></svg><div class="t " style="left:28.5px;top:724.00px;font-size:13px;color:#000;">Run:</div><svg class="i" style="left:73px;top:722px;" width="15" height="14" viewBox="0 0 15 14"><rect x="3.5" y="0.5" width="11" height="10" fill="none" stroke="#b8c2ca"/><rect x="0.5" y="3.5" width="11" height="10" fill="#e3e6ee" stroke="#b8c2ca"/><rect x="1.5" y="6" width="9" height="7" fill="#a9d7ee"/></svg><div class="t " style="left:92px;top:724.00px;font-size:13px;color:#000;">StrategyPatternDemo</div><svg class="i" style="left:223px;top:726px;" width="8" height="8" viewBox="0 0 8 8"><path d="M0.5 0.5l7 7M7.5 0.5l-7 7" stroke="#a8a8a8" stroke-width="1"/></svg><svg class="i" style="left:1853px;top:723px;" width="14" height="14" viewBox="0 0 14 14"><g transform="translate(7 7)"><g fill="#6e6e6e"><circle r="4.7"/><rect x="-1.6" y="-6.5" width="3.2" height="13" rx=".7"/><rect x="-1.6" y="-6.5" width="3.2" height="13" rx=".7" transform="rotate(60)"/><rect x="-1.6" y="-6.5" width="3.2" height="13" rx=".7" transform="rotate(120)"/></g><circle r="2" fill="#e3e6ee"/></g></svg><div class="r" style="left:1880px;top:729px;width:12px;height:2px;background:#6e6e6e;"></div><svg class="i" style="left:31px;top:752px;" width="12" height="13" viewBox="0 0 12 13"><path d="M1 0.5v12L11.5 6.5z" fill="#59a869"/></svg><svg class="i" style="left:29px;top:777px;" width="14" height="14" viewBox="0 0 14 14"><path d="M2 12.5L8 6.5" stroke="#6e6e6e" stroke-width="2.6" stroke-linecap="round"/><path d="M7 4.5a4 4 0 0 1 5.5-3.5L10 3.5l1.5 1.5L14 2.5A4 4 0 0 1 9.5 7z" fill="#6e6e6e"/></svg><div class="r" style="left:26px;top:800px;width:20px;height:1px;background:#d1d1d1;"></div><div class="r" style="left:31px;top:812px;width:10px;height:10px;background:#c4c4c4;"></div><svg class="i" style="left:29px;top:838px;" width="14" height="12" viewBox="0 0 14 12"><path d="M0.5 3h4l1.5-2h3l1.5 2h3v8.5h-13z" fill="#c4c4c4"/><circle cx="7" cy="7" r="2.5" fill="#f2f2f2"/><circle cx="7" cy="7" r="1.3" fill="#c4c4c4"/></svg><svg class="i" style="left:29px;top:862px;" width="14" height="14" viewBox="0 0 14 14"><circle cx="6" cy="7" r="4" fill="#c4c4c4"/><path d="M6 1v2M1 7h2M2.5 3.5l1.5 1.5M9 3l-1 1.5" stroke="#c4c4c4" stroke-width="1.2"/><path d="M8 9l5 5M13 9l-5 5" stroke="#c4c4c4" stroke-width="1.4"/></svg><svg class="i" style="left:29px;top:887px;" width="14" height="14" viewBox="0 0 14 14"><path d="M5 3V1h8v12H5v-2" fill="none" stroke="#c4c4c4" stroke-width="1.3"/><path d="M0 7h8M5.5 4.5L8.5 7l-3 2.5" fill="none" stroke="#c4c4c4" stroke-width="1.3"/></svg><div class="r" style="left:26px;top:911px;width:20px;height:1px;background:#d1d1d1;"></div><svg class="i" style="left:29px;top:922px;" width="14" height="10" viewBox="0 0 14 10"><rect x="0" y="0" width="6" height="4" fill="#6e6e6e"/><rect x="8" y="0" width="6" height="4" fill="#6e6e6e"/><rect x="0" y="6" width="14" height="4" fill="#6e6e6e"/></svg><div class="r" style="left:26px;top:944px;width:20px;height:1px;background:#d1d1d1;"></div><svg class="i" style="left:28px;top:953px;" width="15" height="15" viewBox="0 0 15 15"><path d="M1 14l5-5" stroke="#6e6e6e" stroke-width="1.5"/><path d="M9 1l5 5-2 .5-2 2.5.3 2.5-1 1L4 7.2l1-1 2.5.3L10 4.5z" fill="#6e6e6e"/></svg><svg class="i" style="left:59px;top:752px;" width="12" height="13" viewBox="0 0 12 13"><path d="M6 12.5V2M1.5 6L6 1.5 10.5 6" fill="none" stroke="#c4c4c4" stroke-width="1.5"/></svg><svg class="i" style="left:59px;top:778px;" width="12" height="13" viewBox="0 0 12 13"><path d="M6 0.5V11M1.5 7L6 11.5 10.5 7" fill="none" stroke="#c4c4c4" stroke-width="1.5"/></svg><svg class="i" style="left:58px;top:805px;" width="14" height="13" viewBox="0 0 14 13"><path d="M0 1h13M0 5h13" stroke="#6e6e6e" stroke-width="1.4"/><path d="M0 9.5h2" stroke="#6e6e6e" stroke-width="1.4"/><path d="M5 9.5h5.5a2 2 0 0 0 0-4.5" fill="none" stroke="#6e6e6e" stroke-width="1.4"/><path d="M7.5 7l-3 2.5 3 2.5" fill="none" stroke="#6e6e6e" stroke-width="1.4"/></svg><div class="r" style="left:54px;top:826px;width:22px;height:22px;background:#dcdcdc;border-radius:3px"></div><svg class="i" style="left:58px;top:831px;" width="14" height="13" viewBox="0 0 14 13"><path d="M0 2h5M0 6h5M0 10.8h13" stroke="#6e6e6e" stroke-width="1.6"/><path d="M9.5 0v7.5M6.8 5.2l2.7 2.8 2.7-2.8" fill="none" stroke="#6e6e6e" stroke-width="1.5"/></svg><svg class="i" style="left:58px;top:856px;" width="14" height="13" viewBox="0 0 14 13"><rect x="3" y="0" width="8" height="3.5" fill="#6e6e6e"/><rect x="0" y="4.5" width="14" height="6" rx="1" fill="#6e6e6e"/><rect x="3" y="8" width="8" height="5" fill="#6e6e6e" stroke="#f2f2f2" stroke-width="1"/></svg><svg class="i" style="left:59px;top:881px;" width="12" height="13" viewBox="0 0 12 13"><path d="M0 2.5h12M4 2.5V0.7h4v1.8" fill="none" stroke="#6e6e6e" stroke-width="1.4"/><path d="M1.5 4h9l-.8 9h-7.4z" fill="#6e6e6e"/></svg><div class="t m" style="left:91px;top:749.1px;color:#4d4d4d">&quot;C:\Program Files\Java\jdk1.8.0_201\bin\java.exe&quot; ...</div><div class="t m" style="left:91px;top:771.1px;color:#080808">10 + 5 = 15</div><div class="t m" style="left:91px;top:793.1px;color:#080808">10 - 5 = 5</div><div class="t m" style="left:91px;top:815.1px;color:#080808">10 <span style="display:inline-block;width:8px;text-align:center;font-size:17px;line-height:1px;position:relative;top:3.5px">*</span> 5 = 50</div><div class="t m" style="left:91px;top:859.1px;color:#26268c">Process finished with exit code 0</div><div class="r" style="left:91px;top:879px;width:2px;height:17px;background:#000;"></div><svg class="i" style="left:33px;top:1013px;" width="9" height="12" viewBox="0 0 9 12"><circle cx="2" cy="2" r="1.6" fill="#6e6e6e"/><circle cx="2" cy="10.5" r="1.6" fill="#6e6e6e"/><circle cx="7.5" cy="3" r="1.6" fill="#6e6e6e"/><path d="M2 2v9M7.5 3c0 4-5.5 3-5.5 7" fill="none" stroke="#6e6e6e" stroke-width="1.6"/></svg><div class="t " style="left:48.0px;top:1012.64px;font-size:12px;color:#000;transform:scaleX(1.1091);transform-origin:0 0;">Git</div><svg class="i" style="left:83px;top:1013px;" width="9" height="12" viewBox="0 0 9 12"><path d="M0.5 0.5v11L8.5 6z" fill="#6e6e6e"/></svg><div class="t " style="left:98.0px;top:1012.64px;font-size:12px;color:#000;transform:scaleX(1.0447);transform-origin:0 0;">Run</div><svg class="i" style="left:140px;top:1013px;" width="12" height="12" viewBox="0 0 12 12"><path d="M0 1.2h11M0 4.8h7M0 8.4h9" stroke="#6e6e6e" stroke-width="1.5"/></svg><div class="t " style="left:157.0px;top:1012.64px;font-size:12px;color:#000;transform:scaleX(1.0273);transform-origin:0 0;">Logcat</div><svg class="i" style="left:215px;top:1013px;" width="12" height="12" viewBox="0 0 12 12"><rect x="4" y="1" width="4" height="10" fill="none" stroke="#6e6e6e" stroke-width="1.1"/><path d="M0 1.5h3M9 10.5h3" stroke="#6e6e6e" stroke-width="1"/></svg><div class="t " style="left:232.0px;top:1012.64px;font-size:12px;color:#000;transform:scaleX(0.9706);transform-origin:0 0;">Sequence Diagram</div><svg class="i" style="left:353px;top:1012px;" width="13" height="13" viewBox="0 0 13 13"><circle cx="6" cy="6" r="5.3" fill="none" stroke="#6e6e6e" stroke-width="1.3"/><path d="M6 2.5V6L4.5 8" fill="none" stroke="#6e6e6e" stroke-width="1.2"/><path d="M7 6v7l6-3.5z" fill="#6e6e6e"/></svg><div class="t " style="left:370.0px;top:1012.64px;font-size:12px;color:#000;transform:scaleX(1.0522);transform-origin:0 0;">Profiler</div><svg class="i" style="left:427px;top:1012px;" width="13" height="13" viewBox="0 0 13 13"><path d="M1 4.5l3.5-3.5 3.5 3.5-1.3 1.3L4.5 3.5 2.3 5.8z" fill="#6e6e6e"/><path d="M5.5 5l6.5 7" stroke="#6e6e6e" stroke-width="2"/></svg><div class="t " style="left:444.0px;top:1012.64px;font-size:12px;color:#000;transform:scaleX(1.0792);transform-origin:0 0;">Build</div><svg class="i" style="left:494px;top:1013px;" width="12" height="12" viewBox="0 0 12 12"><path d="M6 0.5l6 3-6 3-6-3z" fill="#6e6e6e"/><path d="M0 6l6 3 6-3M0 8.8l6 3 6-3" fill="none" stroke="#6e6e6e" stroke-width="1.2"/></svg><div class="t " style="left:510.0px;top:1012.64px;font-size:12px;color:#000;transform:scaleX(0.9880);transform-origin:0 0;">Dependencies</div><svg class="i" style="left:607px;top:1013px;" width="10" height="12" viewBox="0 0 10 12"><path d="M0 1.5h2M0 5.5h2M0 9.5h2M3.5 1.5h6.5M3.5 5.5h6.5M3.5 9.5h6.5" stroke="#6e6e6e" stroke-width="1.4"/></svg><div class="t " style="left:622.0px;top:1012.64px;font-size:12px;color:#000;transform:scaleX(0.9815);transform-origin:0 0;">TODO</div><svg class="i" style="left:676px;top:1012px;" width="15" height="14" viewBox="0 0 15 14"><circle cx="6.2" cy="8.2" r="5.8" fill="#3d9ee8"/><path d="M0.4 8.2A5.8 5.8 0 0 1 10 3.6L6.2 8.2z" fill="#e06055"/><circle cx="6.2" cy="8.2" r="3.4" fill="#fff"/><circle cx="6.2" cy="8" r="1.6" fill="#3d9ee8"/><path d="M4.6 9h3.2l-.5 2.6H5.1z" fill="#3d9ee8"/><path d="M12.2 0.3l1.7 1.7-1.7 1.7-1.7-1.7z" fill="#3d9ee8"/></svg><div class="t " style="left:696.0px;top:1012.64px;font-size:12px;color:#000;transform:scaleX(0.9809);transform-origin:0 0;">LuaCheck</div><svg class="i" style="left:769px;top:1013px;" width="11" height="11" viewBox="0 0 11 11"><circle cx="5.5" cy="5.5" r="5.5" fill="#6e6e6e"/><path d="M5.5 2.5v4" stroke="#f2f2f2" stroke-width="1.5"/><circle cx="5.5" cy="8.3" r=".9" fill="#f2f2f2"/></svg><div class="t " style="left:784.0px;top:1012.64px;font-size:12px;color:#000;transform:scaleX(1.0022);transform-origin:0 0;">Problems</div><svg class="i" style="left:855px;top:1013px;" width="11" height="11" viewBox="0 0 11 11"><rect x="0" y="0" width="11" height="11" fill="#6e6e6e"/><path d="M2.2 2.8l2.5 2.2-2.5 2.2M5.5 8.5h3.5" fill="none" stroke="#f2f2f2" stroke-width="1.2"/></svg><div class="t " style="left:871.0px;top:1012.64px;font-size:12px;color:#000;transform:scaleX(1.0274);transform-origin:0 0;">Terminal</div><svg class="i" style="left:937px;top:1012px;" width="13" height="13" viewBox="0 0 13 13"><path d="M6.5 0.5l5.5 3v6l-5.5 3L1 9.5v-6z" fill="#6e6e6e"/><path d="M5 3.8v5.5l4.3-2.75z" fill="#f2f2f2"/></svg><div class="t " style="left:954.0px;top:1012.64px;font-size:12px;color:#000;transform:scaleX(0.9519);transform-origin:0 0;">Services</div><svg class="i" style="left:1019px;top:1012px;" width="11" height="13" viewBox="0 0 11 13"><path d="M2 3h7v7H2z" fill="#6e6e6e"/><path d="M4 0.5h3v2.5H4zM0 5h11M0 8h11M3 10v2.5M8 10v2.5" stroke="#6e6e6e" stroke-width="1.2" fill="#6e6e6e"/></svg><div class="t " style="left:1035.0px;top:1012.64px;font-size:12px;color:#000;transform:scaleX(1.0282);transform-origin:0 0;">App Inspection</div><svg class="i" style="left:6px;top:1034px;" width="13" height="13" viewBox="0 0 13 13"><rect x="3.5" y="0.5" width="9" height="9" fill="none" stroke="#6e6e6e"/><path d="M0.5 3.5v9h9" fill="none" stroke="#6e6e6e"/></svg><div class="t " style="left:27.5px;top:1034.44px;font-size:12px;color:#000;transform:scaleX(1.0836);transform-origin:0 0;">Build completed successfully in 4 sec, 576 ms (moments ago)</div><div class="t " style="left:1621.4px;top:1034.44px;font-size:12px;color:#000;transform:scaleX(1.0437);transform-origin:0 0;">7:1</div><div class="t " style="left:1651px;top:1034.44px;font-size:12px;color:#000;transform:scaleX(0.9252);transform-origin:0 0;">CRLF</div><div class="t " style="left:1691px;top:1034.44px;font-size:12px;color:#000;transform:scaleX(1.0294);transform-origin:0 0;">UTF-8</div><div class="t " style="left:1737px;top:1034.44px;font-size:12px;color:#000;transform:scaleX(1.0819);transform-origin:0 0;">3 spaces*</div><svg class="i" style="left:1807px;top:1033px;" width="9" height="13" viewBox="0 0 9 13"><circle cx="1.8" cy="1.8" r="1.5" fill="#6e6e6e"/><circle cx="1.8" cy="11" r="1.5" fill="#6e6e6e"/><circle cx="7.2" cy="2.5" r="1.5" fill="#6e6e6e"/><path d="M1.8 2v9M7.2 3c0 4-5.4 3-5.4 7" fill="none" stroke="#6e6e6e" stroke-width="1.5"/></svg><div class="t " style="left:1822px;top:1034.44px;font-size:12px;color:#000;transform:scaleX(1.1180);transform-origin:0 0;">master</div><svg class="i" style="left:1872px;top:1034px;" width="12" height="12" viewBox="0 0 12 12"><path d="M2 5.5V3.5a2.5 2.5 0 0 1 5 0" fill="none" stroke="#6e6e6e" stroke-width="1.4"/><rect x="4" y="5.5" width="8" height="6.5" fill="#6e6e6e"/></svg><svg class="i" style="left:1897px;top:1033px;" width="12" height="14" viewBox="0 0 12 14"><path d="M2.5 1.6l2.6 6.6M9.8 1.6L6 10.5Q5 12.6 2.6 12.6" fill="none" stroke="#ff0a1a" stroke-width="2.8" stroke-linecap="round"/></svg></body></html>
